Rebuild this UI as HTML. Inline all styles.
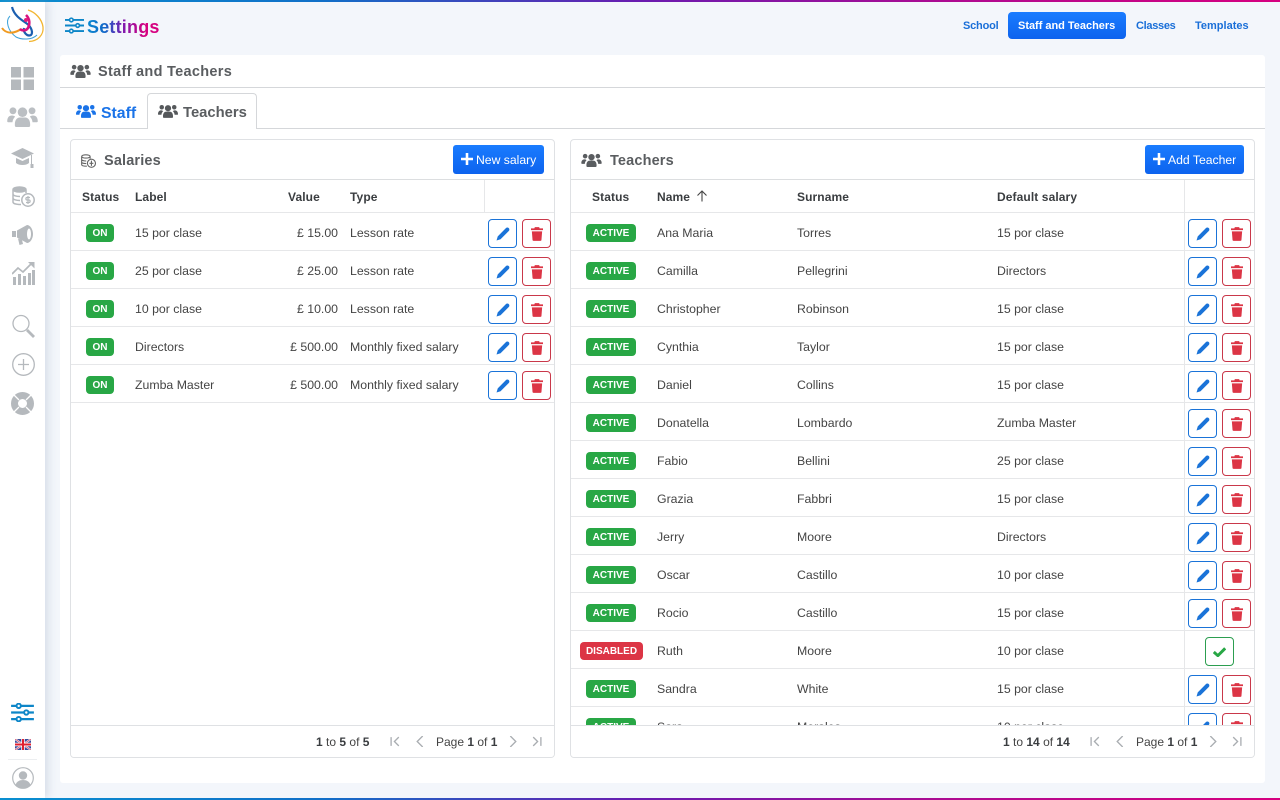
<!DOCTYPE html>
<html><head><meta charset="utf-8"><title>Settings</title>
<style>
*{box-sizing:border-box;margin:0;padding:0}
html,body{width:1280px;height:800px;overflow:hidden;background:#f3f6fb;font-family:"Liberation Sans",sans-serif;font-size:12.3px;color:#444}
.a{position:absolute}
.bar{position:absolute;left:0;width:1280px;height:2px;background:linear-gradient(90deg,#0a8fd0 0%,#1070c8 25%,#6a1bb0 50%,#b00a90 75%,#d6007f 100%)}
#side{position:absolute;left:0;top:2px;width:45px;height:796px;background:#fff;box-shadow:3px 0 8px rgba(150,165,190,.3)}
svg{position:absolute;display:block}
.nav{position:absolute;top:13px;height:27px;line-height:27px;font-size:11px;font-weight:bold;color:#1a6fd8}
.card{position:absolute;top:139px;height:619px;background:#fff;border:1px solid #dfe1e4;border-radius:4px;overflow:hidden}
.ct{position:absolute;top:13px;font-size:14.5px;font-weight:bold;color:#5a5d60;letter-spacing:.15px}
.hl{position:absolute;left:0;right:0;height:1px;background:#dcdee0}
.btn{position:absolute;top:5px;height:29px;background:linear-gradient(180deg,#1a7cff,#0d63ee);color:#fff;border-radius:3px;font-size:12.2px;line-height:31px}
.th{position:absolute;top:50px;font-weight:bold;font-size:12px;color:#3a3d40;letter-spacing:.1px}
.body{position:absolute;left:0;right:0;top:73px;height:512px;overflow:hidden}
.r{position:absolute;left:0;right:0;height:38px;border-bottom:1px solid #e6e7e9;line-height:38px}
.r span{position:absolute;top:1px;white-space:nowrap}
.b{position:absolute;top:11px;height:18px;line-height:19px;border-radius:4px;color:#fff;background:#28a745;font-size:10px;font-weight:bold;text-align:center}
.b.d{background:#dc3545}
.e,.x,.k{position:absolute;top:6px;width:29px;height:29px;border-radius:4px;border:1px solid #1a73d8;background:#fff}
.x{border-color:#c9384a}.k{border-color:#2c9e50}
.vl{position:absolute;top:40px;bottom:33px;width:1px;background:#e6e7e9}
.ft{position:absolute;left:0;right:0;top:585px;height:33px;border-top:1px solid #dfe1e4;background:#fff;line-height:32px;color:#444;font-size:12px}
.ft b{color:#3a3d40}
.ft span{position:absolute;top:0;white-space:nowrap}
.ft svg{top:10px}
</style></head><body>
<svg width="0" height="0" style="position:absolute">
<defs>
<symbol id="users" viewBox="0 0 32 22"><circle cx="6" cy="5" r="3.6"/><circle cx="26" cy="5" r="3.6"/><circle cx="16" cy="6.5" r="5"/><path d="M0 16c0-4 2-6 5-6 1.500 0 2.500.5 3.200 1.200C6.500 12.800 5.600 15 5.500 17H1c-.6 0-1-.4-1-1zM32 16c0-4-2-6-5-6-1.500 0-2.500.5-3.200 1.200 1.700 1.600 2.600 3.800 2.700 5.800H31c.6 0 1-.4 1-1zM8 19c0-4.500 2.500-7 5-7h6c2.500 0 5 2.500 5 7v1.500c0 .8-.7 1.500-1.500 1.500h-13C8.700 22 8 21.300 8 20.500z"/></symbol>
<symbol id="pen" viewBox="0 0 16 16"><path d="M11.300 1.300c.9-.9 2.400-.9 3.300 0 .9.900.9 2.400 0 3.300L5.200 14 .6 15.400 2 10.700z" fill="#1a73d8"/></symbol>
<symbol id="trash" viewBox="0 0 14 16"><path d="M4.500 0h5l.6 1.500H14v2H0v-2h3.900zM1 5h12l-.8 10c0 .6-.6 1-1.200 1H3c-.6 0-1.100-.4-1.200-1z" fill="#dc3545"/></symbol>
<symbol id="chk" viewBox="0 0 16 12"><path d="M1 6L6 10.500 15 1.500" fill="none" stroke="#28a745" stroke-width="3.600"/></symbol>
<symbol id="plus" viewBox="0 0 14 14"><path d="M5.500 0h3v5.500H14v3H8.500V14h-3V8.500H0v-3h5.500z" fill="#fff"/></symbol>
<symbol id="sl" viewBox="0 0 24 20"><g fill="none" stroke="currentColor" stroke-width="2.400"><path d="M0 3h5.500M10.500 3H24M0 10h13.500M18.500 10H24M0 17h5.500M10.500 17H24"/><circle cx="8" cy="3" r="2.300" stroke-width="2"/><circle cx="16" cy="10" r="2.300" stroke-width="2"/><circle cx="8" cy="17" r="2.300" stroke-width="2"/></g></symbol>
<symbol id="first" viewBox="0 0 10 10"><path d="M1 1v8M8 1L4 5l4 4" fill="none" stroke="#a9adb1" stroke-width="1.200"/></symbol>
<symbol id="prev" viewBox="0 0 10 10"><path d="M7 0L2 5l5 5" fill="none" stroke="#a9adb1" stroke-width="1.200"/></symbol>
<symbol id="next" viewBox="0 0 10 10"><path d="M3 0l5 5-5 5" fill="none" stroke="#a9adb1" stroke-width="1.200"/></symbol>
<symbol id="last" viewBox="0 0 10 10"><path d="M9 1v8M2 1l4 4-4 4" fill="none" stroke="#a9adb1" stroke-width="1.200"/></symbol>
</defs></svg>

<div class="bar" style="top:0"></div>
<div id="side"></div>
<div class="bar" style="top:798px"></div>

<!-- logo -->
<svg style="left:1px;top:3px" width="44" height="42" viewBox="0 0 44 42" fill="none">
<path d="M27 7c7 2 14 9 15 17 .8 8-5 14-14 14.500" stroke="#f2b632" stroke-width="1.300"/>
<path d="M9 13C4 18 7 28 15 34c6 3 16 3 21-2" stroke="#3aa0d8" stroke-width="1"/>
<path d="M1 25c4 6 12 6 19 1" stroke="#f09a20" stroke-width="2"/>
<path d="M11 4c2 8 8 12 14 16 6 4 7 10 5 12-4 2-8-3-7-7" stroke="#1c5fb0" stroke-width="2.200"/>
<path d="M25 12c4 4 4 9 2 13-2 3-6 3-8 1" stroke="#d8127f" stroke-width="2.600"/>
<circle cx="25" cy="17" r="2" fill="#e01f7b"/>
</svg>

<!-- sidebar icons -->
<svg style="left:11px;top:67px" width="23" height="23" viewBox="0 0 23 23" fill="#b5b9bd"><path d="M0 0h10v10.500H0zM12.500 0H23v10.500H12.500zM0 12.500h10V23H0zM12.500 12.500H23V23H12.500z"/></svg>
<svg style="left:7px;top:106px;fill:#bbbfc3" width="31" height="21"><use href="#users"/></svg>
<svg style="left:11px;top:148px" width="24" height="21" viewBox="0 0 24 21" fill="#b5b9bd"><path d="M11.500 0L23 5.500 11.500 11 0 5.500zM5 10l6.500 3 6.500-3v5c-2 1.500-4 2-6.500 2S7 16.500 5 15z"/><path d="M20.500 7v9" stroke="#b5b9bd"/><rect x="19.500" y="16" width="3" height="4"/></svg>
<svg style="left:12px;top:186px" width="23" height="21" viewBox="0 0 23 21" fill="none" stroke="#b5b9bd" stroke-width="1.500"><ellipse cx="7.500" cy="3.500" rx="6.500" ry="2.500" fill="#b5b9bd"/><path d="M1 4v12c0 1.500 3 2.500 8 2.500M1 8c0 1.500 3 2.500 7 2.500M1 12c0 1.500 3 2.500 7 2.500M14 4v3"/><circle cx="16" cy="14" r="6.200" fill="#fff"/><path d="M18 11.500h-3c-1.500 0-1.500 2.500 0 2.500h2c1.500 0 1.500 2.500 0 2.500h-3M16 10v8" stroke-width="1.200"/></svg>
<svg style="left:12px;top:224px" width="22" height="21" viewBox="0 0 22 21" fill="#b5b9bd"><path d="M0 7h4v6H0zM5 6.500L15 1c3 0 6 4 6 9s-3 9-6 9L5 13.500zM6 14.500l4 1.500 1 4-3.500 1z"/><ellipse cx="17" cy="10" rx="2" ry="5.500" fill="#fff"/></svg>
<svg style="left:12px;top:262px" width="23" height="23" viewBox="0 0 23 23" fill="#b5b9bd"><path d="M1 15h3v8H1zM6 12h3v11H6zM11 14h3v9h-3zM16 11h3v12h-3zM20 8h3v15h-3z"/><path d="M0 12l6-6 5 4 8-8" fill="none" stroke="#b5b9bd" stroke-width="1.700"/><path d="M16 0h6.500v6.500z"/></svg>
<svg style="left:12px;top:314px" width="23" height="24" viewBox="0 0 23 24" fill="none" stroke="#b5b9bd"><circle cx="9" cy="9.500" r="8" stroke-width="1.300"/><path d="M15 16l7 7" stroke-width="2.800"/></svg>
<svg style="left:12px;top:353px" width="23" height="23" viewBox="0 0 23 23" fill="none" stroke="#b5b9bd" stroke-width="1.300"><circle cx="11.500" cy="11.500" r="10.800"/><path d="M11.500 6v11M6 11.500h11"/></svg>
<svg style="left:11px;top:392px" width="23" height="23" viewBox="0 0 23 23"><circle cx="11.500" cy="11.500" r="8" fill="none" stroke="#b5b9bd" stroke-width="7"/><g stroke="#fff" stroke-width="1.300"><path d="M3 3l5 5M20 3l-5 5M3 20l5-5M20 20l-5-5"/></g></svg>
<svg style="left:11px;top:703px;color:#0d86c8" width="23" height="19"><use href="#sl"/></svg>
<svg style="left:15px;top:739px" width="16" height="11" viewBox="0 0 16 11"><rect width="16" height="11" fill="#3a4a9a"/><path d="M0 0l16 11M16 0L0 11" stroke="#e8e8f0" stroke-width="2"/><path d="M0 0l16 11M16 0L0 11" stroke="#d24060" stroke-width=".7"/><path d="M8 0v11M0 5.500h16" stroke="#fff" stroke-width="3.500"/><path d="M8 0v11M0 5.500h16" stroke="#e02030" stroke-width="2"/></svg>
<div class="a" style="left:8px;top:759px;width:29px;height:1px;background:#eceef0"></div>
<svg style="left:12px;top:767px" width="22" height="22" viewBox="0 0 22 22"><circle cx="11" cy="11" r="10.300" fill="#fff" stroke="#b5b9bd" stroke-width="1.200"/><circle cx="11" cy="8.500" r="4.200" fill="#b5b9bd"/><path d="M3.500 18c1-3.500 4-5 7.500-5s6.500 1.500 7.500 5c-2 2-4.500 3-7.500 3s-5.500-1-7.500-3z" fill="#b5b9bd"/></svg>

<!-- header -->
<svg style="left:65px;top:17px;color:#0d86c8" width="19" height="17"><use href="#sl"/></svg>
<div class="a" style="left:87px;top:16px;font-size:18px;font-weight:bold;line-height:22px;letter-spacing:.2px;background:linear-gradient(90deg,#0a8ad0 0%,#1266c8 25%,#7a1ab0 48%,#d6007f 80%);-webkit-background-clip:text;background-clip:text;color:transparent">Settings</div>
<div class="nav" style="left:963px;letter-spacing:-.2px">School</div>
<div class="a" style="left:1008px;top:12px;width:118px;height:27px;background:linear-gradient(180deg,#1a7cff,#0d63ee);border-radius:4px"></div>
<div class="nav" style="left:1018px;color:#fff;letter-spacing:-.02px">Staff and Teachers</div>
<div class="nav" style="left:1136px;letter-spacing:-.3px">Classes</div>
<div class="nav" style="left:1195px">Templates</div>

<!-- panel -->
<div class="a" style="left:60px;top:55px;width:1205px;height:728px;background:#fff;border-radius:3px"></div>
<svg style="left:70px;top:64px;fill:#5a5d60" width="21" height="14"><use href="#users"/></svg>
<div class="a" style="left:98px;top:64px;font-size:14.5px;font-weight:bold;color:#5a5d60;letter-spacing:.3px;line-height:17px">Staff and Teachers</div>
<div class="a" style="left:60px;top:87px;width:1205px;height:1px;background:#d5d7da"></div>
<div class="a" style="left:60px;top:128px;width:1205px;height:1px;background:#d5d7da"></div>
<svg style="left:76px;top:104px;fill:#1a73e8" width="20" height="14"><use href="#users"/></svg>
<div class="a" style="left:101px;top:104px;font-size:15.8px;font-weight:bold;color:#1a73e8;line-height:19px">Staff</div>
<div class="a" style="left:147px;top:93px;width:110px;height:36px;background:#fff;border:1px solid #d5d7da;border-bottom:0;border-radius:4px 4px 0 0"></div>
<svg style="left:158px;top:104px;fill:#55585b" width="20" height="14"><use href="#users"/></svg>
<div class="a" style="left:183px;top:104px;font-size:14.8px;font-weight:bold;color:#5a5d60;line-height:19px">Teachers</div>

<!-- Salaries -->
<div class="card" style="left:70px;width:485px">
<svg style="left:10px;top:14px" width="15" height="14" viewBox="0 0 23 21" fill="none" stroke="#666" stroke-width="1.700"><ellipse cx="7.500" cy="3.500" rx="6.500" ry="2.500"/><path d="M1 4v12c0 1.500 3 2.500 8 2.500M1 8c0 1.500 3 2.500 7 2.500M1 12c0 1.500 3 2.500 7 2.500M14 4v3"/><circle cx="16" cy="14" r="6.200" fill="#fff"/><path d="M16 10v8M13 14h6"/></svg>
<div class="ct" style="left:33px">Salaries</div>
<div class="btn" style="left:382px;width:91px"><svg style="left:8px;top:8px" width="12" height="12"><use href="#plus"/></svg><span class="a" style="left:23px;top:0;white-space:nowrap">New salary</span></div>
<div class="hl" style="top:39px"></div>
<div class="th" style="left:11px">Status</div><div class="th" style="left:64px">Label</div><div class="th" style="left:217px">Value</div><div class="th" style="left:279px">Type</div>
<div class="hl" style="top:72px;background:#e6e7e9"></div>
<div class="vl" style="left:413px;bottom:auto;height:33px"></div>
<div class="body">
<div class="r" style="top:0"><div class="b" style="left:15px;width:28px">ON</div><span style="left:64px">15 por clase</span><span style="right:216px">£ 15.00</span><span style="left:279px">Lesson rate</span><div class="e" style="left:417px"><svg style="left:7px;top:7px" width="14" height="14"><use href="#pen"/></svg></div><div class="x" style="left:451px"><svg style="left:8px;top:7px" width="12" height="14"><use href="#trash"/></svg></div></div>
<div class="r" style="top:38px"><div class="b" style="left:15px;width:28px">ON</div><span style="left:64px">25 por clase</span><span style="right:216px">£ 25.00</span><span style="left:279px">Lesson rate</span><div class="e" style="left:417px"><svg style="left:7px;top:7px" width="14" height="14"><use href="#pen"/></svg></div><div class="x" style="left:451px"><svg style="left:8px;top:7px" width="12" height="14"><use href="#trash"/></svg></div></div>
<div class="r" style="top:76px"><div class="b" style="left:15px;width:28px">ON</div><span style="left:64px">10 por clase</span><span style="right:216px">£ 10.00</span><span style="left:279px">Lesson rate</span><div class="e" style="left:417px"><svg style="left:7px;top:7px" width="14" height="14"><use href="#pen"/></svg></div><div class="x" style="left:451px"><svg style="left:8px;top:7px" width="12" height="14"><use href="#trash"/></svg></div></div>
<div class="r" style="top:114px"><div class="b" style="left:15px;width:28px">ON</div><span style="left:64px">Directors</span><span style="right:216px">£ 500.00</span><span style="left:279px">Monthly fixed salary</span><div class="e" style="left:417px"><svg style="left:7px;top:7px" width="14" height="14"><use href="#pen"/></svg></div><div class="x" style="left:451px"><svg style="left:8px;top:7px" width="12" height="14"><use href="#trash"/></svg></div></div>
<div class="r" style="top:152px"><div class="b" style="left:15px;width:28px">ON</div><span style="left:64px">Zumba Master</span><span style="right:216px">£ 500.00</span><span style="left:279px">Monthly fixed salary</span><div class="e" style="left:417px"><svg style="left:7px;top:7px" width="14" height="14"><use href="#pen"/></svg></div><div class="x" style="left:451px"><svg style="left:8px;top:7px" width="12" height="14"><use href="#trash"/></svg></div></div>
</div>
<div class="ft">
<span style="left:245px"><b>1</b> to <b>5</b> of <b>5</b></span>
<svg style="left:319px" width="11" height="11"><use href="#first"/></svg>
<svg style="left:344px" width="11" height="11"><use href="#prev"/></svg>
<span style="left:365px">Page <b>1</b> of <b>1</b></span>
<svg style="left:436px" width="11" height="11"><use href="#next"/></svg>
<svg style="left:460px" width="11" height="11"><use href="#last"/></svg>
</div>
</div>

<!-- Teachers -->
<div class="card" style="left:570px;width:685px">
<svg style="left:10px;top:13px;fill:#5a5d60" width="21" height="14"><use href="#users"/></svg>
<div class="ct" style="left:39px">Teachers</div>
<div class="btn" style="left:574px;width:99px"><svg style="left:8px;top:8px" width="12" height="12"><use href="#plus"/></svg><span class="a" style="left:23px;top:0;white-space:nowrap">Add Teacher</span></div>
<div class="hl" style="top:39px"></div>
<div class="th" style="left:21px">Status</div><div class="th" style="left:86px">Name</div>
<svg style="left:125px;top:50px" width="12" height="12" viewBox="0 0 12 12" fill="none" stroke="#444" stroke-width="1.100"><path d="M6 11.500V1M1.500 5.500L6 1l4.500 4.500"/></svg>
<div class="th" style="left:226px">Surname</div><div class="th" style="left:426px">Default salary</div>
<div class="hl" style="top:72px;background:#e6e7e9"></div>
<div class="vl" style="left:613px;bottom:auto;height:33px"></div>
<div class="body">
<div class="r" style="top:0"><div class="b" style="left:15px;width:50px">ACTIVE</div><span style="left:86px">Ana Maria</span><span style="left:226px">Torres</span><span style="left:426px">15 por clase</span><div class="e" style="left:617px"><svg style="left:7px;top:7px" width="14" height="14"><use href="#pen"/></svg></div><div class="x" style="left:651px"><svg style="left:8px;top:7px" width="12" height="14"><use href="#trash"/></svg></div></div>
<div class="r" style="top:38px"><div class="b" style="left:15px;width:50px">ACTIVE</div><span style="left:86px">Camilla</span><span style="left:226px">Pellegrini</span><span style="left:426px">Directors</span><div class="e" style="left:617px"><svg style="left:7px;top:7px" width="14" height="14"><use href="#pen"/></svg></div><div class="x" style="left:651px"><svg style="left:8px;top:7px" width="12" height="14"><use href="#trash"/></svg></div></div>
<div class="r" style="top:76px"><div class="b" style="left:15px;width:50px">ACTIVE</div><span style="left:86px">Christopher</span><span style="left:226px">Robinson</span><span style="left:426px">15 por clase</span><div class="e" style="left:617px"><svg style="left:7px;top:7px" width="14" height="14"><use href="#pen"/></svg></div><div class="x" style="left:651px"><svg style="left:8px;top:7px" width="12" height="14"><use href="#trash"/></svg></div></div>
<div class="r" style="top:114px"><div class="b" style="left:15px;width:50px">ACTIVE</div><span style="left:86px">Cynthia</span><span style="left:226px">Taylor</span><span style="left:426px">15 por clase</span><div class="e" style="left:617px"><svg style="left:7px;top:7px" width="14" height="14"><use href="#pen"/></svg></div><div class="x" style="left:651px"><svg style="left:8px;top:7px" width="12" height="14"><use href="#trash"/></svg></div></div>
<div class="r" style="top:152px"><div class="b" style="left:15px;width:50px">ACTIVE</div><span style="left:86px">Daniel</span><span style="left:226px">Collins</span><span style="left:426px">15 por clase</span><div class="e" style="left:617px"><svg style="left:7px;top:7px" width="14" height="14"><use href="#pen"/></svg></div><div class="x" style="left:651px"><svg style="left:8px;top:7px" width="12" height="14"><use href="#trash"/></svg></div></div>
<div class="r" style="top:190px"><div class="b" style="left:15px;width:50px">ACTIVE</div><span style="left:86px">Donatella</span><span style="left:226px">Lombardo</span><span style="left:426px">Zumba Master</span><div class="e" style="left:617px"><svg style="left:7px;top:7px" width="14" height="14"><use href="#pen"/></svg></div><div class="x" style="left:651px"><svg style="left:8px;top:7px" width="12" height="14"><use href="#trash"/></svg></div></div>
<div class="r" style="top:228px"><div class="b" style="left:15px;width:50px">ACTIVE</div><span style="left:86px">Fabio</span><span style="left:226px">Bellini</span><span style="left:426px">25 por clase</span><div class="e" style="left:617px"><svg style="left:7px;top:7px" width="14" height="14"><use href="#pen"/></svg></div><div class="x" style="left:651px"><svg style="left:8px;top:7px" width="12" height="14"><use href="#trash"/></svg></div></div>
<div class="r" style="top:266px"><div class="b" style="left:15px;width:50px">ACTIVE</div><span style="left:86px">Grazia</span><span style="left:226px">Fabbri</span><span style="left:426px">15 por clase</span><div class="e" style="left:617px"><svg style="left:7px;top:7px" width="14" height="14"><use href="#pen"/></svg></div><div class="x" style="left:651px"><svg style="left:8px;top:7px" width="12" height="14"><use href="#trash"/></svg></div></div>
<div class="r" style="top:304px"><div class="b" style="left:15px;width:50px">ACTIVE</div><span style="left:86px">Jerry</span><span style="left:226px">Moore</span><span style="left:426px">Directors</span><div class="e" style="left:617px"><svg style="left:7px;top:7px" width="14" height="14"><use href="#pen"/></svg></div><div class="x" style="left:651px"><svg style="left:8px;top:7px" width="12" height="14"><use href="#trash"/></svg></div></div>
<div class="r" style="top:342px"><div class="b" style="left:15px;width:50px">ACTIVE</div><span style="left:86px">Oscar</span><span style="left:226px">Castillo</span><span style="left:426px">10 por clase</span><div class="e" style="left:617px"><svg style="left:7px;top:7px" width="14" height="14"><use href="#pen"/></svg></div><div class="x" style="left:651px"><svg style="left:8px;top:7px" width="12" height="14"><use href="#trash"/></svg></div></div>
<div class="r" style="top:380px"><div class="b" style="left:15px;width:50px">ACTIVE</div><span style="left:86px">Rocio</span><span style="left:226px">Castillo</span><span style="left:426px">15 por clase</span><div class="e" style="left:617px"><svg style="left:7px;top:7px" width="14" height="14"><use href="#pen"/></svg></div><div class="x" style="left:651px"><svg style="left:8px;top:7px" width="12" height="14"><use href="#trash"/></svg></div></div>
<div class="r" style="top:418px"><div class="b d" style="left:9px;width:63px">DISABLED</div><span style="left:86px">Ruth</span><span style="left:226px">Moore</span><span style="left:426px">10 por clase</span><div class="k" style="left:634px"><svg style="left:7px;top:9px" width="13" height="10"><use href="#chk"/></svg></div></div>
<div class="r" style="top:456px"><div class="b" style="left:15px;width:50px">ACTIVE</div><span style="left:86px">Sandra</span><span style="left:226px">White</span><span style="left:426px">15 por clase</span><div class="e" style="left:617px"><svg style="left:7px;top:7px" width="14" height="14"><use href="#pen"/></svg></div><div class="x" style="left:651px"><svg style="left:8px;top:7px" width="12" height="14"><use href="#trash"/></svg></div></div>
<div class="r" style="top:494px"><div class="b" style="left:15px;width:50px">ACTIVE</div><span style="left:86px">Sara</span><span style="left:226px">Morales</span><span style="left:426px">10 por clase</span><div class="e" style="left:617px"><svg style="left:7px;top:7px" width="14" height="14"><use href="#pen"/></svg></div><div class="x" style="left:651px"><svg style="left:8px;top:7px" width="12" height="14"><use href="#trash"/></svg></div></div>
<div class="a" style="left:613px;top:0;width:1px;height:512px;background:#e6e7e9"></div>
</div>
<div class="ft">
<span style="left:432px"><b>1</b> to <b>14</b> of <b>14</b></span>
<svg style="left:519px" width="11" height="11"><use href="#first"/></svg>
<svg style="left:544px" width="11" height="11"><use href="#prev"/></svg>
<span style="left:565px">Page <b>1</b> of <b>1</b></span>
<svg style="left:636px" width="11" height="11"><use href="#next"/></svg>
<svg style="left:660px" width="11" height="11"><use href="#last"/></svg>
</div>
</div>
</body></html>
